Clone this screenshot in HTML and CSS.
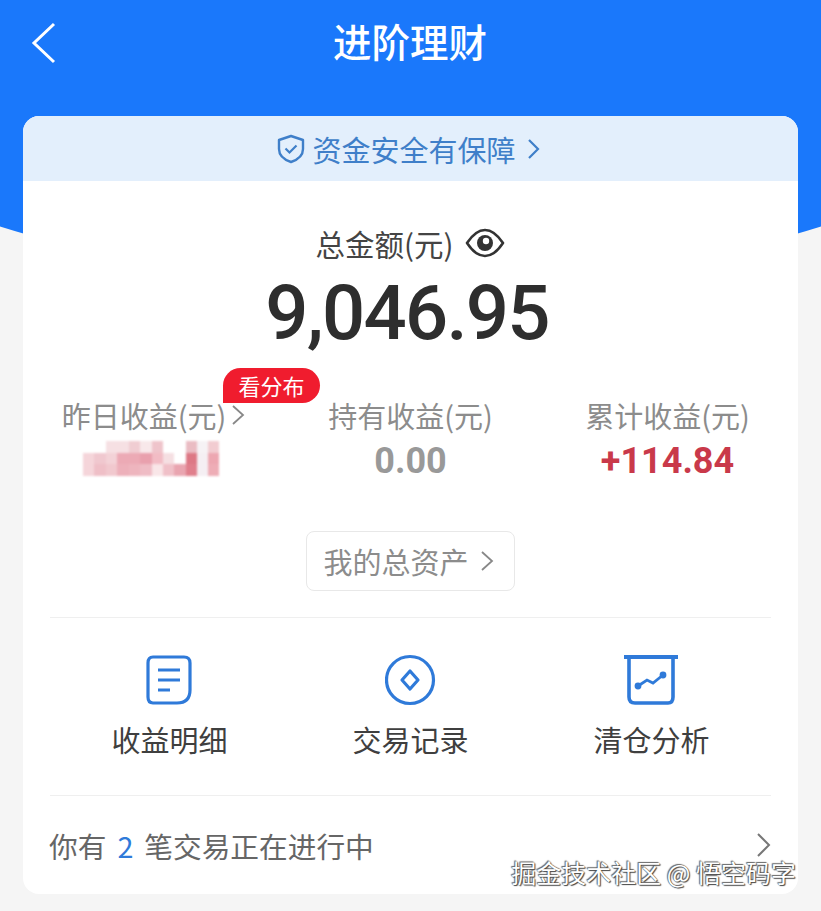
FILE: index.html
```html
<!DOCTYPE html>
<html lang="zh-CN">
<head>
  <meta charset="UTF-8">
  <meta name="viewport" content="width=device-width, initial-scale=1.0">
  <title>进阶理财</title>
  <link rel="stylesheet" href="styles.css">
</head>
<body>

<div class="page">
  <!-- Blue header -->
  <div class="header">
    <svg class="back" width="26" height="42" viewBox="0 0 26 42"><path d="M23 2 L3 21 L23 40" fill="none" stroke="#fff" stroke-width="3"/></svg>
    <div class="title">进阶理财</div>
  </div>

  <div class="card">
    <div class="banner">
      <svg width="28" height="30" viewBox="0 0 28 30"><path d="M14 2 L26 6 V15 C26 22 20 26 14 28 C8 26 2 22 2 15 V6 Z" fill="none" stroke="#3f7fc9" stroke-width="2.4" stroke-linejoin="round"/><path d="M8.5 14.5 L12.5 18.5 L19.5 11.5" fill="none" stroke="#3f7fc9" stroke-width="2.2"/></svg>
      <span class="banner-text">资金安全有保障</span>
      <svg width="14" height="22" viewBox="0 0 14 22"><path d="M3 2 L12 11 L3 20" fill="none" stroke="#3f7fc9" stroke-width="2.2"/></svg>
    </div>

    <div class="total-label">
      <span>总金额(元)</span>
      <svg width="40" height="32" viewBox="0 0 40 32"><path d="M2 16 C8 7 14 3 20 3 C26 3 32 7 38 16 C32 25 26 29 20 29 C14 29 8 25 2 16 Z" fill="none" stroke="#333" stroke-width="2.6" stroke-linejoin="round"/><circle cx="20" cy="16" r="8" fill="#333"/><circle cx="21" cy="14" r="3.2" fill="#fff"/></svg>
    </div>
    <div class="total-value">9,046.95</div>

    <!-- Three income stats -->
    <div class="stats">
      <div class="stat">
        <div class="badge">看分布</div>
        <div class="stat-label">昨日收益(元)<svg class="stat-arrow" width="14" height="22" viewBox="0 0 14 22"><path d="M2 2 L12 11 L2 20" fill="none" stroke="#888" stroke-width="1.8"/></svg></div>
        <svg class="mosaic" width="136" height="36" viewBox="0 0 136 36">
          <!-- row 1 -->
          <rect x="23" y="0" width="23" height="12" fill="#f6e0e3"/>
          <rect x="46" y="0" width="11" height="12" fill="#f0cdd2"/>
          <rect x="57" y="0" width="12" height="12" fill="#f8e8ea"/>
          <rect x="69" y="0" width="11" height="12" fill="#efc4cb"/>
          <rect x="103" y="0" width="11" height="12" fill="#eabcc3"/>
          <rect x="114" y="0" width="11" height="12" fill="#f6f2f5"/>
          <rect x="125" y="0" width="11" height="12" fill="#f2ccd1"/>
          <!-- row 2 -->
          <rect x="0" y="12" width="11" height="11" fill="#f5d5da"/>
          <rect x="11" y="12" width="12" height="11" fill="#f0c8cf"/>
          <rect x="23" y="12" width="11" height="11" fill="#f3d2d7"/>
          <rect x="34" y="12" width="23" height="11" fill="#ecaab5"/>
          <rect x="57" y="12" width="12" height="11" fill="#e9a0ad"/>
          <rect x="69" y="12" width="11" height="11" fill="#f2bcc5"/>
          <rect x="80" y="12" width="11" height="11" fill="#f5dfe2"/>
          <rect x="103" y="12" width="11" height="11" fill="#dd7885"/>
          <rect x="114" y="12" width="11" height="11" fill="#f5eff3"/>
          <rect x="125" y="12" width="11" height="11" fill="#eda7b1"/>
          <!-- row 3 -->
          <rect x="0" y="23" width="11" height="12" fill="#f5d5da"/>
          <rect x="11" y="23" width="12" height="12" fill="#efbfc7"/>
          <rect x="23" y="23" width="11" height="12" fill="#f1c8ce"/>
          <rect x="34" y="23" width="12" height="12" fill="#edb0ba"/>
          <rect x="46" y="23" width="11" height="12" fill="#eeb5be"/>
          <rect x="57" y="23" width="12" height="12" fill="#efbcc5"/>
          <rect x="69" y="23" width="11" height="12" fill="#f9e6e8"/>
          <rect x="80" y="23" width="11" height="12" fill="#f0c0c8"/>
          <rect x="91" y="23" width="12" height="12" fill="#e9a5b0"/>
          <rect x="103" y="23" width="11" height="12" fill="#e07f8c"/>
          <rect x="114" y="23" width="11" height="12" fill="#f5eff3"/>
          <rect x="125" y="23" width="11" height="12" fill="#eeadb6"/>
        </svg>
      </div>
      <div class="stat">
        <div class="stat-label">持有收益(元)</div>
        <div class="stat-value">0.00</div>
      </div>
      <div class="stat">
        <div class="stat-label">累计收益(元)</div>
        <div class="stat-value stat-value-red">+114.84</div>
      </div>
    </div>

    <div class="assets-wrap">
      <div class="assets">我的总资产<svg width="14" height="22" viewBox="0 0 14 22"><path d="M2 2 L12 11 L2 20" fill="none" stroke="#888" stroke-width="1.8"/></svg></div>
    </div>

    <div class="divider"></div>

    <!-- Shortcuts -->
    <div class="shortcuts">
      <div class="shortcut">
        <svg width="50" height="52" viewBox="0 0 50 52"><path d="M8 3 H39 Q45 3 45 9 V36 Q45 49 32 49 H8 Q3 49 3 43 V9 Q3 3 8 3 Z" fill="none" stroke="#2f7ad9" stroke-width="3.2"/><path d="M13 16 H35 M13 26 H35 M13 36 H25" stroke="#2f7ad9" stroke-width="3.2"/></svg>
        <div class="shortcut-label">收益明细</div>
      </div>
      <div class="shortcut">
        <svg width="52" height="52" viewBox="0 0 52 52"><circle cx="25" cy="26" r="23.5" fill="none" stroke="#2f7ad9" stroke-width="3.2"/><path d="M25 17 L33 26 L25 35 L17 26 Z" fill="none" stroke="#2f7ad9" stroke-width="3.2" stroke-linejoin="round"/></svg>
        <div class="shortcut-label">交易记录</div>
      </div>
      <div class="shortcut">
        <svg width="56" height="52" viewBox="0 0 56 52"><path d="M5 4 V43 Q5 49 11 49 H44 Q49 49 49 43 V4" fill="none" stroke="#2f7ad9" stroke-width="3.6"/><path d="M0 3 H54" stroke="#2f7ad9" stroke-width="4"/><path d="M14 32 L23 26 L29 29 L39 21" fill="none" stroke="#2f7ad9" stroke-width="2.8"/><circle cx="14" cy="32" r="3.4" fill="#2f7ad9"/><circle cx="39" cy="21" r="3.4" fill="#2f7ad9"/></svg>
        <div class="shortcut-label">清仓分析</div>
      </div>
    </div>

    <div class="divider divider-low"></div>

    <div class="progress">
      <div>你有<span class="progress-num">2</span>笔交易正在进行中</div>
      <svg width="16" height="26" viewBox="0 0 16 26"><path d="M2 2 L13 13 L2 24" fill="none" stroke="#777" stroke-width="2"/></svg>
    </div>
  </div>

  <div class="watermark">掘金技术社区 @ 悟空码字</div>
</div>

</body>
</html>
```

FILE: styles.css
```css
* {
  box-sizing: border-box;
}
body {
  margin: 0;
  background-color: #f5f5f5;
  font-family: "Noto Sans CJK SC", "Noto Sans", sans-serif;
  color: #333;
}
.page {
  position: relative;
  width: 821px;
  height: 911px;
  overflow: hidden;
}
.header {
  height: 284px;
  padding: 14px 31px 0;
  background-color: #1a78fb;
  clip-path: ellipse(680px 284px at 50% 0);
  display: flex;
  align-items: flex-start;
}
.back {
  margin-top: 8px;
}
.title {
  flex-grow: 1;
  margin-right: 27px;
  text-align: center;
  font-size: 38.5px;
  line-height: 52px;
  font-weight: 500;
  color: #fff;
}
.card {
  position: relative;
  height: 778px;
  margin: -168px 23px 0;
  background-color: #fff;
  border-radius: 16px;
  overflow: hidden;
}
.banner {
  height: 65px;
  padding-right: 4px;
  background-color: #e3effc;
  display: flex;
  justify-content: center;
  align-items: center;
  color: #3f7fc9;
}
.banner-text {
  margin: 0 10px 0 7px;
  font-size: 29px;
}
.total-label {
  height: 44px;
  margin-top: 40px;
  display: flex;
  justify-content: center;
  align-items: center;
  gap: 12px;
  font-size: 29.5px;
  color: #444;
}
.total-value {
  height: 90px;
  padding: 3px 7px 0 0;
  text-align: center;
  font-family: Roboto, sans-serif;
  font-weight: 500;
  font-size: 76px;
  letter-spacing: -1.7px;
  line-height: 90px;
  color: #2e2e2e;
}
.stats {
  display: grid;
  grid-template-columns: repeat(3, 1fr);
  padding: 0 2px;
  margin-top: 40px;
}
.stat {
  position: relative;
  display: flex;
  flex-direction: column;
  align-items: center;
}
.stat-label {
  height: 40px;
  display: flex;
  align-items: center;
  font-size: 29px;
  color: #8c8c8c;
  white-space: nowrap;
}
.stat-arrow {
  margin-left: 5px;
}
.stat-value {
  height: 50px;
  font-family: Roboto, sans-serif;
  font-weight: 700;
  font-size: 36px;
  line-height: 52px;
  color: #999;
}
.stat-value-red {
  color: #c9394a;
}
.mosaic {
  margin: 6px 0 0 -6px;
  filter: blur(1px);
}
.badge {
  position: absolute;
  left: 198px;
  top: -27px;
  width: 97px;
  height: 35px;
  border-radius: 18px 18px 18px 0;
  background-color: #f01c2e;
  color: #fff;
  font-size: 22px;
  line-height: 35px;
  text-align: center;
}
.assets-wrap {
  display: flex;
  justify-content: center;
  margin-top: 46px;
}
.assets {
  width: 209px;
  height: 60px;
  padding-right: 4px;
  border: 1px solid #e8e8e8;
  border-radius: 8px;
  display: flex;
  justify-content: center;
  align-items: center;
  gap: 11px;
  font-size: 29px;
  color: #8c8c8c;
}
.divider {
  height: 1px;
  margin: 26px 27px 0;
  background-color: #efefef;
}
.divider-low {
  margin-top: 0;
}
.shortcuts {
  height: 177px;
  display: grid;
  grid-template-columns: repeat(3, 241px);
  justify-content: center;
}
.shortcut {
  padding-top: 36px;
  display: flex;
  flex-direction: column;
  align-items: center;
}
.shortcut-label {
  margin-top: 10px;
  font-size: 29px;
  line-height: 46px;
  color: #3f3f3f;
}
.progress {
  height: 98px;
  padding: 0 26px;
  display: flex;
  justify-content: space-between;
  align-items: center;
  font-size: 28.7px;
  color: #666;
}
.progress-num {
  margin: 0 11px;
  color: #2f7ad9;
}
.watermark {
  position: absolute;
  right: 25px;
  top: 855px;
  font-size: 25px;
  line-height: 34px;
  color: #fff;
  text-shadow: 1px 1px 1px #444, -1px -1px 1px #666, 0 0 1px #333;
  white-space: nowrap;
}
```
